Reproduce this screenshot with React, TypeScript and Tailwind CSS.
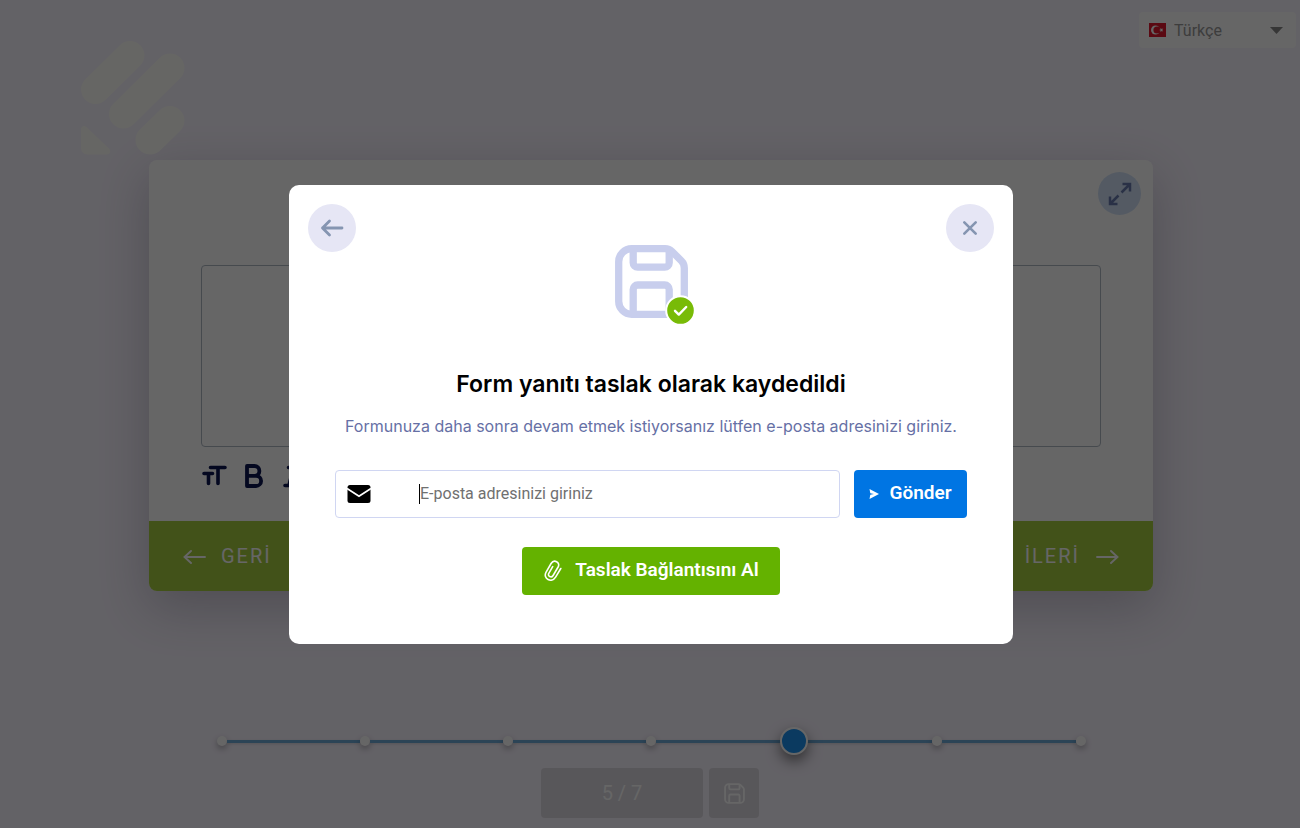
import { useState } from "react";

const LANGUAGES = ["Türkçe", "English", "Deutsch"];
const TOTAL_STEPS = 7;
const CURRENT_STEP = 5;

function Logo() {
  return (
    <svg className="mt-7 h-[115px] w-[104px]" viewBox="0 0 104 115" fill="none" aria-hidden="true">
      <g stroke="#fffffa" strokeWidth="29" strokeLinecap="round">
        <path d="M14.500 49.500 49 15.500" />
        <path d="M42.500 74 89 28" />
        <path d="M69 100 89 80.500" />
      </g>
      <path d="M0 89.500c0-3.500 3.500-4.500 6-2l22 21c2.500 2.500 1 6-2 6H6a6 6 0 0 1-6-6z" fill="#fffffa" />
    </svg>
  );
}

function TurkishFlag() {
  return (
    <svg className="h-3.5 w-[17px] shrink-0" viewBox="0 0 17 14" aria-hidden="true">
      <rect width="17" height="14" fill="#e0182d" />
      <circle cx="6.500" cy="7" r="4.500" fill="#fff" />
      <circle cx="8" cy="7" r="3.600" fill="#e0182d" />
      <path d="M10 7l1.500-.6.100-1.600 1 1.200 1.600-.4-.9 1.400.9 1.400-1.600-.4-1 1.200-.1-1.600z" fill="#fff" />
    </svg>
  );
}

function FloppyIcon({ className, strokeWidth }: { className?: string; strokeWidth: number }) {
  return (
    <svg
      className={className}
      viewBox="0 0 73 73"
      fill="none"
      stroke="currentColor"
      strokeWidth={strokeWidth}
      strokeLinejoin="round"
      aria-hidden="true"
    >
      <path d="M16.700 3.700H50c3 0 5 .8 7 2.800l9.500 9.500c2 2 2.800 4 2.800 7v33.300a13 13 0 0 1-13 13H16.700a13 13 0 0 1-13-13V16.700a13 13 0 0 1 13-13z" />
      <path d="M18.200 3.700v14a4.500 4.500 0 0 0 4.500 4.500h27a4.500 4.500 0 0 0 4.500-4.500v-13" />
      <path d="M18.200 69.300V44.500a4.500 4.500 0 0 1 4.500-4.500h27a4.500 4.500 0 0 1 4.500 4.500v24.800" />
    </svg>
  );
}

function Stepper() {
  return (
    <ol className="mx-auto mt-[136px] flex h-7 w-full max-w-[869px] items-center">
      {Array.from({ length: TOTAL_STEPS }).map((_, i) => {
        const active = i + 1 === CURRENT_STEP;
        return (
          <li key={i} className={i === 0 ? "flex items-center" : "flex flex-1 items-center"}>
            {i > 0 && <span className="h-[3px] flex-1 bg-[#6eaad8] shadow-[0_1px_3px_rgba(0,0,0,0.15)]" />}
            <span className="flex w-2.5 shrink-0 items-center justify-center">
              {active ? (
                <span className="z-10 size-7 shrink-0 rounded-full border-2 border-white bg-[#1c92f0] shadow-[0_6px_14px_rgba(0,0,0,0.5)]" />
              ) : (
                <span className="size-2.5 shrink-0 rounded-full bg-white shadow-[0_3px_6px_rgba(0,0,0,0.3)]" />
              )}
            </span>
          </li>
        );
      })}
    </ol>
  );
}

function FormCard() {
  return (
    <div className="mx-auto mt-[5px] w-full max-w-[1004px] overflow-hidden rounded-lg bg-white shadow-[0_16px_50px_rgba(40,35,60,0.24)]">
      <div className="flex justify-end pt-3 pr-3">
        <button
          type="button"
          aria-label="Tam ekran"
          className="flex size-[43px] items-center justify-center rounded-full bg-[#d2e2f8]"
        >
          <svg className="size-6" viewBox="0 0 24 24" fill="none" stroke="#6a7cae" strokeWidth="2.500" aria-hidden="true">
            <path d="M14.500 2H22v7.500M22 2l-8.500 8.500M9.500 22H2v-7.500M2 22l8.500-8.500" />
          </svg>
        </button>
      </div>

      <div className="px-[52px] pt-[50px]">
        <textarea
          aria-label="Yanıtınız"
          className="block h-[182px] w-full resize-none rounded-[4px] border border-[#b0b8c4]"
        />
        <div className="flex h-[74px] items-start gap-[18px] pt-4">
          <button type="button" aria-label="Yazı boyutu">
            <svg width="26" height="26" viewBox="0 0 26 26" fill="none" stroke="#0a1551" strokeWidth="3.600" strokeLinecap="round" strokeLinejoin="round" aria-hidden="true">
              <path d="M9.500 4.500h14.500M17 4.500v16M3 10.500h8.500M7.500 10.500v10" />
            </svg>
          </button>
          <button type="button" aria-label="Kalın">
            <svg width="20" height="26" viewBox="0 0 20 26" fill="none" stroke="#0a1551" strokeWidth="3.800" strokeLinecap="round" strokeLinejoin="round" aria-hidden="true">
              <path d="M2 3h7.500a4.800 4.800 0 0 1 0 9.800H2zM2 12.800h9a5 5 0 0 1 0 10.200H2z" />
            </svg>
          </button>
          <button type="button" aria-label="İtalik">
            <svg width="20" height="26" viewBox="0 0 20 26" fill="none" stroke="#0a1551" strokeWidth="3.600" strokeLinecap="round" strokeLinejoin="round" aria-hidden="true">
              <path d="M5.500 4.500h10M10.500 4.500 6 22.500M2 22.500h10" />
            </svg>
          </button>
        </div>
      </div>

      <div className="flex h-[70px] items-center justify-between bg-[#a5cc40] px-[34px] text-xl tracking-[2px] text-white">
        <button type="button" className="flex items-center gap-[15px]">
          <svg width="23" height="16" viewBox="0 0 23 16" fill="none" stroke="currentColor" strokeWidth="1.900" strokeLinecap="round" aria-hidden="true">
            <path d="M22 9H2M8 3 1.500 9 8 15" />
          </svg>
          GERİ
        </button>
        <button type="button" className="flex items-center gap-4">
          İLERİ
          <svg width="23" height="16" viewBox="0 0 23 16" fill="none" stroke="currentColor" strokeWidth="1.900" strokeLinecap="round" aria-hidden="true">
            <path d="M1 9h20M15 3l6.500 6L15 15" />
          </svg>
        </button>
      </div>
    </div>
  );
}

function DraftSavedDialog() {
  const [email, setEmail] = useState("");

  return (
    <div
      role="dialog"
      aria-modal="true"
      aria-labelledby="draft-title"
      className="w-full max-w-[724px] rounded-[10px] bg-white px-[19px] pt-[19px] pb-[49px]"
    >
      <div className="flex items-start justify-between">
        <button type="button" aria-label="Geri" className="flex size-12 items-center justify-center rounded-full bg-[#e6e6f5]">
          <svg width="24" height="18" viewBox="0 0 24 18" fill="none" stroke="#8595b1" strokeWidth="2.800" strokeLinecap="round" strokeLinejoin="round" aria-hidden="true">
            <path d="M22 9H2.500M9.500 2 2.500 9l7 7" />
          </svg>
        </button>

        {/* Saved draft icon with check badge */}
        <div className="relative mt-[41px] size-[73px] text-[#c8ceed]">
          <FloppyIcon className="size-full" strokeWidth={7.3} />
          <svg className="absolute -right-2 -bottom-2 size-[31px]" viewBox="0 0 31 31" fill="none" aria-hidden="true">
            <circle cx="15.500" cy="15.500" r="14.300" fill="#78bb07" stroke="#fff" strokeWidth="2" />
            <path d="m10 15.800 3.800 3.800 7.400-7.600" stroke="#fff" strokeWidth="2.400" strokeLinecap="round" strokeLinejoin="round" />
          </svg>
        </div>

        <button type="button" aria-label="Kapat" className="flex size-12 items-center justify-center rounded-full bg-[#e6e6f5]">
          <svg width="16" height="16" viewBox="0 0 16 16" fill="none" stroke="#8595b1" strokeWidth="2.600" strokeLinecap="round" aria-hidden="true">
            <path d="m2.300 2.300 11.400 11.400M13.700 2.300 2.300 13.700" />
          </svg>
        </button>
      </div>

      <h1 id="draft-title" className="mt-[50px] text-center font-['Inter',sans-serif] text-[23px] leading-8 font-semibold text-black">
        Form yanıtı taslak olarak kaydedildi
      </h1>
      <p className="mt-[14px] text-center font-['Inter',sans-serif] text-base leading-6 text-[#6670a5]">
        Formunuza daha sonra devam etmek istiyorsanız lütfen e-posta adresinizi giriniz.
      </p>

      <form className="mt-8 flex gap-[14px] px-[27px]" onSubmit={(e) => e.preventDefault()}>
        <div className="flex h-12 flex-1 items-center rounded-[4px] border border-[#d0d6f2] pl-[11px]">
          <label htmlFor="draft-email" aria-label="E-posta" className="mr-12 shrink-0">
            <svg width="24" height="18" viewBox="0 0 24 18" aria-hidden="true">
              <rect x=".5" width="23" height="18" rx="2.500" fill="#000" />
              <path d="m0 3.500 12 7.700 12-7.700" fill="none" stroke="#fff" strokeWidth="1.800" />
            </svg>
          </label>
          {!email && <span className="h-5 w-px bg-black" />}
          <input
            id="draft-email"
            type="email"
            value={email}
            onChange={(e) => setEmail(e.target.value)}
            placeholder="E-posta adresinizi giriniz"
            className="h-full min-w-0 flex-1 text-base text-black outline-none placeholder:text-[#707070]"
          />
        </div>
        <button
          type="submit"
          className="flex h-12 w-[113px] shrink-0 items-center justify-center gap-2.5 rounded-[4px] bg-[#0075e3] text-[19px] font-semibold text-white"
        >
          <svg width="10" height="10" viewBox="0 0 10 10" fill="currentColor" aria-hidden="true">
            <path d="M.5 0 10 5 .5 10l.8-4.300L5 5 1.300 4.300z" />
          </svg>
          Gönder
        </button>
      </form>

      <button
        type="button"
        className="mx-auto mt-[29px] flex h-12 w-[258px] items-center justify-center gap-3 rounded-[4px] bg-[#64b200] text-[19px] font-semibold text-white"
      >
        <svg width="20" height="22" viewBox="0 0 20 22" fill="none" stroke="currentColor" strokeWidth="1.600" strokeLinecap="round" strokeLinejoin="round" aria-hidden="true">
          <path d="m17.800 8.500-5.200 8.600c-3.800 6.200-13.200 1.800-9.500-5l5-8.600c2.800-4.600 9.600-1.300 7 3.500l-5 8.500c-1.700 2.800-5.900.8-4.300-2.100l3.900-6.700" />
        </svg>
        Taslak Bağlantısını Al
      </button>
    </div>
  );
}

export default function App() {
  return (
    <div className="min-h-screen bg-[#f8f4ff] pb-[10px] pl-0.5 font-['Roboto',sans-serif]">
      <header className="flex items-start justify-between pt-3 pr-1 pl-[79px]">
        <Logo />
        <div className="flex h-9 w-[157px] items-center gap-2 rounded-[4px] bg-white px-2.5">
          <TurkishFlag />
          <select aria-label="Dil" className="min-w-0 flex-1 appearance-none bg-transparent pt-0.5 text-base text-[#999]">
            {LANGUAGES.map((lang) => (
              <option key={lang}>{lang}</option>
            ))}
          </select>
          <svg className="mr-[3px] h-[7px] w-[13px] shrink-0" viewBox="0 0 13 7" fill="#888" aria-hidden="true">
            <path d="M0 0h13L6.500 7z" />
          </svg>
        </div>
      </header>

      <main>
        <FormCard />
        <Stepper />
        <div className="mt-[13px] flex justify-center gap-1.5 pr-0.5 text-white">
          <div className="flex h-[50px] w-[162px] items-center justify-center rounded-[4px] bg-[#dcd9e2] text-xl">
            {CURRENT_STEP} / {TOTAL_STEPS}
          </div>
          <button
            type="button"
            aria-label="Taslağı kaydet"
            className="flex size-[50px] items-center justify-center rounded-[4px] bg-[#dcd9e2]"
          >
            <FloppyIcon className="size-[21px]" strokeWidth={6.5} />
          </button>
        </div>
      </main>

      <div className="fixed inset-0 z-20 flex items-center justify-center bg-black/60 pl-0.5">
        <DraftSavedDialog />
      </div>
    </div>
  );
}
